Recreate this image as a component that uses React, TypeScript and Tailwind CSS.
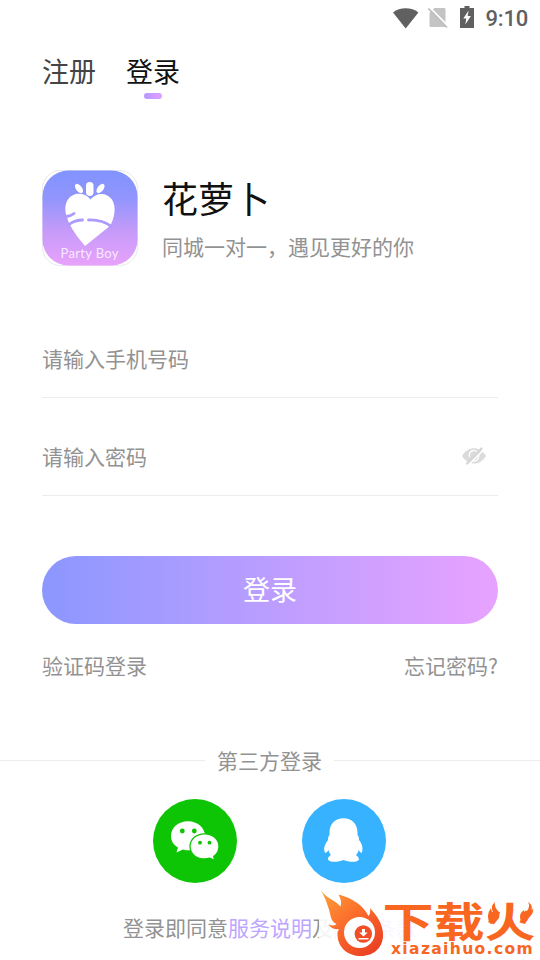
import React from "react";

function StatusBar() {
  return (
    <div className="flex h-9 items-center justify-end pr-3 text-[#606060]">
      <svg width="27" height="21" viewBox="0 0 27 21" className="mr-[8px]" fill="#606060">
        <path d="M12.700 20.500 0 4.500C3.500 1.700 8 .3 12.700.3s9.200 1.400 12.700 4.200z" />
      </svg>
      <svg width="20" height="21" viewBox="0 0 20 21" className="mr-[12px] -mt-px">
        <path d="M6.500 1H16.500Q17.500 1 17.500 2.500V18.500Q17.500 20 16 20H3Q1.500 20 1.500 18.500V6z" fill="#c4c4c4" />
        <path d="M1.800.6 20.500 19.500" stroke="#fff" strokeWidth="1.800" />
        <path d="M.5 1.500 19 20.500" stroke="#bdbdbd" strokeWidth="1.600" />
      </svg>
      <svg width="14" height="22" viewBox="0 0 14 22" className="mr-[11px] -mt-0.5">
        <path d="M4.500 0h5v2H14v20H0V2h4.500z" fill="#606060" />
        <path d="M8.700 4.500 3.300 12.600h3L5.300 18.500l5.600-8.500H7.600z" fill="#fff" />
      </svg>
      <span className="pt-0.5 font-[Roboto,sans-serif] text-[22px] leading-9 tracking-[-0.2px] font-medium">9:10</span>
    </div>
  );
}

function AppLogo() {
  return (
    <svg width="96" height="96" viewBox="0 0 96 96" className="shrink-0">
      <defs>
        <linearGradient id="logoBg" x1="0" y1="0" x2="0" y2="1">
          <stop offset="0" stopColor="#8193ff" />
          <stop offset=".3" stopColor="#9295fc" />
          <stop offset=".65" stopColor="#c79bf9" />
          <stop offset="1" stopColor="#e8a2fb" />
        </linearGradient>
      </defs>
      <rect x=".5" y=".5" width="95" height="95" rx="18" fill="#fff" stroke="#e8e8ec" />
      <rect x=".5" y=".5" width="95" height="95" rx="26" fill="url(#logoBg)" />
      <g fill="#fff">
        <rect x="44" y="12" width="7.500" height="14" rx="3.750" />
        <ellipse cx="37" cy="18.500" rx="3" ry="5.400" transform="rotate(-38 37 18.500)" />
        <ellipse cx="58.500" cy="18.500" rx="3" ry="5.400" transform="rotate(38 58.500 18.500)" />
        <path d="M48.500 29.500C54 22 65 22 70 29.500C75 38 72 48 68.500 55.500L43 76Q27 58 24 44C21 30 30 22 40 24Q45 25 48.500 29.500z" />
      </g>
      <g fill="none" stroke="#ae9afb" strokeWidth="2.800" strokeLinecap="round">
        <path d="M24.500 46.500Q29 46 32 43.500" />
        <path d="M27 54.500Q33 50 40.500 50" />
        <path d="M46.500 50Q60 49.500 69.500 56.500" />
      </g>
      <text x="18.500" y="88" textLength="58" fill="#f9eaff" fontSize="13" className="font-[Lato,sans-serif]">Party Boy</text>
    </svg>
  );
}

function HiddenEye() {
  return (
    <svg width="24" height="20" viewBox="0 0 24 20" className="mt-px mr-3">
      <path d="M0 10C6-.5 18-.5 24 10C18 20 6 20 0 10z" fill="#dbdbdb" />
      <path d="M7.500 11C6.500 5 12 2.500 15 6" fill="none" stroke="#fff" strokeWidth="1.300" />
      <path d="M16.500 9C17.500 14 13 16 10 14.500" fill="none" stroke="#fff" strokeWidth="1.300" />
      <path d="M6.500 19 21.500 4" stroke="#fff" strokeWidth="1.600" />
      <path d="M5 17.500 19.500 2.500" stroke="#d6d6d6" strokeWidth="2.400" strokeLinecap="round" />
    </svg>
  );
}

function Field({ label, children }: { label: string; children?: React.ReactNode }) {
  return (
    <div className="flex h-[98px] items-center justify-between border-b border-[#ececec] pt-[18px]">
      <span>{label}</span>
      {children}
    </div>
  );
}

function WeChat() {
  return (
    <svg width="84" height="84" viewBox="0 0 84 84">
      <circle cx="42" cy="42" r="42" fill="#0ec505" />
      <path d="M35 22.300C25 22.300 18 29 18 37C18 42 20.500 46 25 48.500L23.500 53.500L30 50.500C33 51.500 36 51.500 39 51C46 50 52 44 52 37C52 29 44.500 22.300 35 22.300z" fill="#fff" />
      <path d="M51.500 34.800C43 34.800 37 40.500 37 47.500C37 54.500 43 60 51.500 60Q54 60 57 59.200L61.800 61.500L60.700 57.500C64 55 66 51.500 66 47.500C66 40.500 60 34.800 51.500 34.800z" fill="#fff" stroke="#0ec505" strokeWidth="1.300" />
      <g fill="#0ec505">
        <circle cx="29.300" cy="32" r="2.400" />
        <circle cx="41.300" cy="32" r="2.400" />
        <circle cx="47" cy="43.700" r="1.900" />
        <circle cx="56.500" cy="43.700" r="1.900" />
      </g>
    </svg>
  );
}

function QQ() {
  return (
    <svg width="84" height="84" viewBox="0 0 84 84">
      <circle cx="42" cy="42" r="42" fill="#37b2ff" />
      <path d="M41.500 19.300C33 19.300 27.500 25 27.500 33.500V36Q25.500 38 26 41C21.500 47 21.500 51 23.200 54Q25 54 26.500 51Q27 54 29 56Q25.500 58 26 60.500C27.500 64 37 63 41.500 61C46 63 55.500 64 57 60.500Q57 58 54 56Q56 54 56.700 51Q58 54 59.800 54C61 50 61 46 57 41Q57.500 38 55.500 36V33.500C55.500 25 50 19.300 41.500 19.300z" fill="#fff" />
    </svg>
  );
}

function Watermark() {
  return (
    <div className="absolute right-0 bottom-0 h-[72px] w-[221px] bg-white/90">
      <svg width="221" height="72" viewBox="1 0 221 72">
        <defs>
          <linearGradient id="flame" x1="0" y1="0" x2=".8" y2="1">
            <stop offset="0" stopColor="#ffa13b" />
            <stop offset=".5" stopColor="#fb6b2b" />
            <stop offset="1" stopColor="#ea4024" />
          </linearGradient>
        </defs>
        <path d="M3 2.500C8 10 17 12 22.500 18.500Q24.500 14 20.500 6.500C34 10 45 17 50.500 28Q53 25 52 20C58 27 64 34 65 45C66 59 56 68 43 68C30 68 20 60 19.500 47Q19.300 43 21 41Q13 42 10.500 36Q15 39 18.500 36C12 33 13 27 10.500 20Q8 11 3 2.500z" fill="url(#flame)" />
        <circle cx="41.500" cy="44.500" r="15.500" fill="#fff" />
        <circle cx="45.300" cy="46" r="8.700" fill="#f04e27" />
        <path d="M44 41h3v3.500h2.700L45.500 48.500l-4.200-4H44zM40.500 50h10v1.600h-10z" fill="#fff" />
        <text x="64.500" y="49" fontSize="41" textLength="153" lengthAdjust="spacingAndGlyphs" fill="#f8661f" className="font-['Noto_Sans_CJK_SC',sans-serif] font-bold">下载火</text>
        <path d="M172.500 36Q167 28 173 20Q173 24 175 24Q172 18 177 14Q176 19 180 23Q182 27 181 30Q177 35 172.500 36zM203 33Q200 26 206 22Q206 25 208 24Q213 19 210 14Q215 17 213.500 22Q215 22 215 19.500Q217 29 203 33z" fill="#f8661f" />
        <text x="73" y="66" fontSize="16" textLength="143" lengthAdjust="spacingAndGlyphs" letterSpacing="1.400" fill="#f8661f" className="font-['DejaVu_Sans',sans-serif] font-bold">xiazaihuo.com</text>
      </svg>
    </div>
  );
}

export default function App() {
  return (
    <main className="relative h-[960px] w-[540px] overflow-hidden bg-white font-['Noto_Sans_CJK_SC',sans-serif] text-[21px] leading-8 text-[#929292]">
      <StatusBar />
      <nav className="flex h-[134px] gap-[30px] px-[42px] pt-[15px] text-[27px] leading-10">
        <span className="text-[#444]">注册</span>
        <div className="flex flex-col items-center">
          <span className="text-[#111]">登录</span>
          <span className="mt-0.5 h-1.5 w-[18px] rounded-full bg-linear-to-r from-[#b69aff] to-[#df9fff]" />
        </div>
      </nav>
      <header className="flex h-24 gap-6 px-[42px]">
        <AppLogo />
        <div>
          <h1 className="text-4xl leading-[54px] text-[#111]">花萝卜</h1>
          <p className="mt-1.5">同城一对一，遇见更好的你</p>
        </div>
      </header>
      <section className="mt-[34px] px-[42px]">
        <Field label="请输入手机号码" />
        <Field label="请输入密码"><HiddenEye /></Field>
        <button className="mt-[60px] h-[68px] w-full rounded-full bg-linear-to-r from-[#8b97ff] to-[#e8a2ff] pb-0.5 text-[27px] text-white">登录</button>
        <div className="mt-[25px] flex justify-between">
          <span>验证码登录</span>
          <span>忘记密码?</span>
        </div>
      </section>
      <div className="mt-[63px] flex items-center gap-3">
        <span className="h-px w-[205px] bg-[#ececec]" />
        <span>第三方登录</span>
        <span className="h-px flex-1 bg-[#ececec]" />
      </div>
      <div className="mt-[23px] flex justify-center gap-[65px] pr-0.5">
        <WeChat />
        <QQ />
      </div>
      <p className="mt-[28px] pl-[123px] whitespace-nowrap">
        登录即同意<span className="text-[#bda5ff]">服务说明</span>及<span className="text-[#bda5ff]">隐私条款</span>
      </p>
      <Watermark />
    </main>
  );
}
